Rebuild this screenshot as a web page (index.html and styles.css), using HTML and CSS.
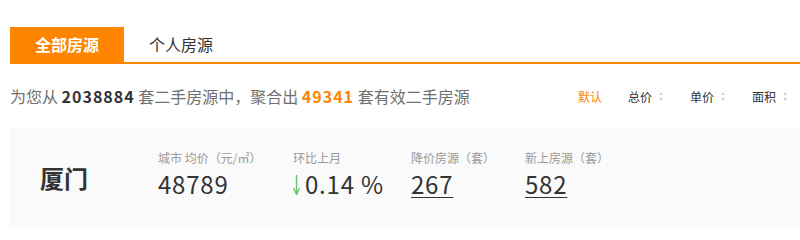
FILE: index.html
```html
<!DOCTYPE html>
<html lang="zh-CN">
<head>
<meta charset="utf-8">
<link rel="stylesheet" href="styles.css">
</head>
<body>
<div class="page">
  <div class="tabs">
    <div class="tab active">全部房源</div>
    <div class="tab">个人房源</div>
  </div>
  <div class="summary">
    <div class="summary-text">为您从 <b class="num dark">2038884</b> 套二手房源中，聚合出 <b class="num orange">49341</b> 套有效二手房源</div>
    <div class="sorts">
      <span class="sort on">默认</span>
      <span class="sort">总价<i class="arr"></i></span>
      <span class="sort">单价<i class="arr"></i></span>
      <span class="sort">面积<i class="arr"></i></span>
    </div>
  </div>
  <div class="stats">
    <div class="city">厦门</div>
    <div class="stat s1">
      <div class="label">城市 均价（元/㎡）</div>
      <div class="value">48789</div>
    </div>
    <div class="stat s2">
      <div class="label">环比上月</div>
      <div class="value"><svg class="down" width="7" height="20" viewBox="0 0 7 20"><path d="M3.5 0 V18" stroke="#6cbf6c" stroke-width="1.4" fill="none"/><path d="M0.5 13 L3.5 19.5 L6.5 13" stroke="#6cbf6c" stroke-width="1.4" fill="none"/></svg>0.14 %</div>
    </div>
    <div class="stat s3">
      <div class="label">降价房源（套）</div>
      <div class="value link">267</div>
    </div>
    <div class="stat s4">
      <div class="label">新上房源（套）</div>
      <div class="value link">582</div>
    </div>
  </div>
</div>
</body>
</html>
```

FILE: styles.css
```css
* { box-sizing: border-box; }
html, body { margin: 0; padding: 0; background: #fff; }
body {
  font-family: "Noto Sans CJK SC", "Microsoft YaHei", sans-serif;
  color: #333;
}
.page { padding: 27px 0 0 10px; width: 810px; }
.tabs {
  display: flex;
  border-bottom: 2px solid #ff8400;
  height: 37px;
}
.tab {
  width: 114px;
  height: 35px;
  line-height: 35px;
  text-align: center;
  font-size: 16px;
  color: #333;
}
.tab.active { background: #ff8400; color: #fff; font-weight: bold; }
.tab + .tab { width: auto; padding-left: 25px; }
.summary {
  display: flex;
  align-items: center;
  justify-content: space-between;
  height: 64px;
}
.summary-text { font-size: 16px; color: #707070; }
.num { font-weight: bold; letter-spacing: 1px; }
.dark { color: #333; }
.orange { color: #ff8400; }
.sorts { display: flex; padding-right: 22px; }
.sort {
  font-size: 12px;
  color: #333;
  display: flex;
  align-items: center;
  margin-left: 26px;
}
.sort.on { color: #ff8400; margin-left: 0; }
.arr {
  display: inline-block;
  width: 5px;
  height: 9px;
  margin-left: 7px;
  position: relative;
}
.arr::before, .arr::after {
  content: "";
  position: absolute;
  left: 0;
  border-left: 2.5px solid transparent;
  border-right: 2.5px solid transparent;
}
.arr::before { top: 0; border-bottom: 3px solid #d0d0d0; }
.arr::after { bottom: 0; border-top: 3px solid #d0d0d0; }
.stats {
  display: flex;
  align-items: center;
  background: #fafafa;
  height: 100px;
  padding-left: 30px;
}
.city {
  font-size: 24px;
  font-weight: bold;
  color: #333;
  width: 118px;
  margin-top: -2px;
}
.stat { margin-top: -6px; }
.s1 { width: 135px; }
.s2 { width: 118px; }
.s3 { width: 114px; }
.label { font-size: 12px; color: #999; line-height: 16px; }
.value {
  font-size: 24px;
  color: #333;
  line-height: 32px;
  margin-top: 2px;
  letter-spacing: 0.8px;
  display: flex;
  align-items: center;
}
.value.link { display: block; text-decoration: underline; text-decoration-thickness: 1px; text-underline-offset: 3px; }
.down { margin-right: 5px; margin-top: 2px; }
```
